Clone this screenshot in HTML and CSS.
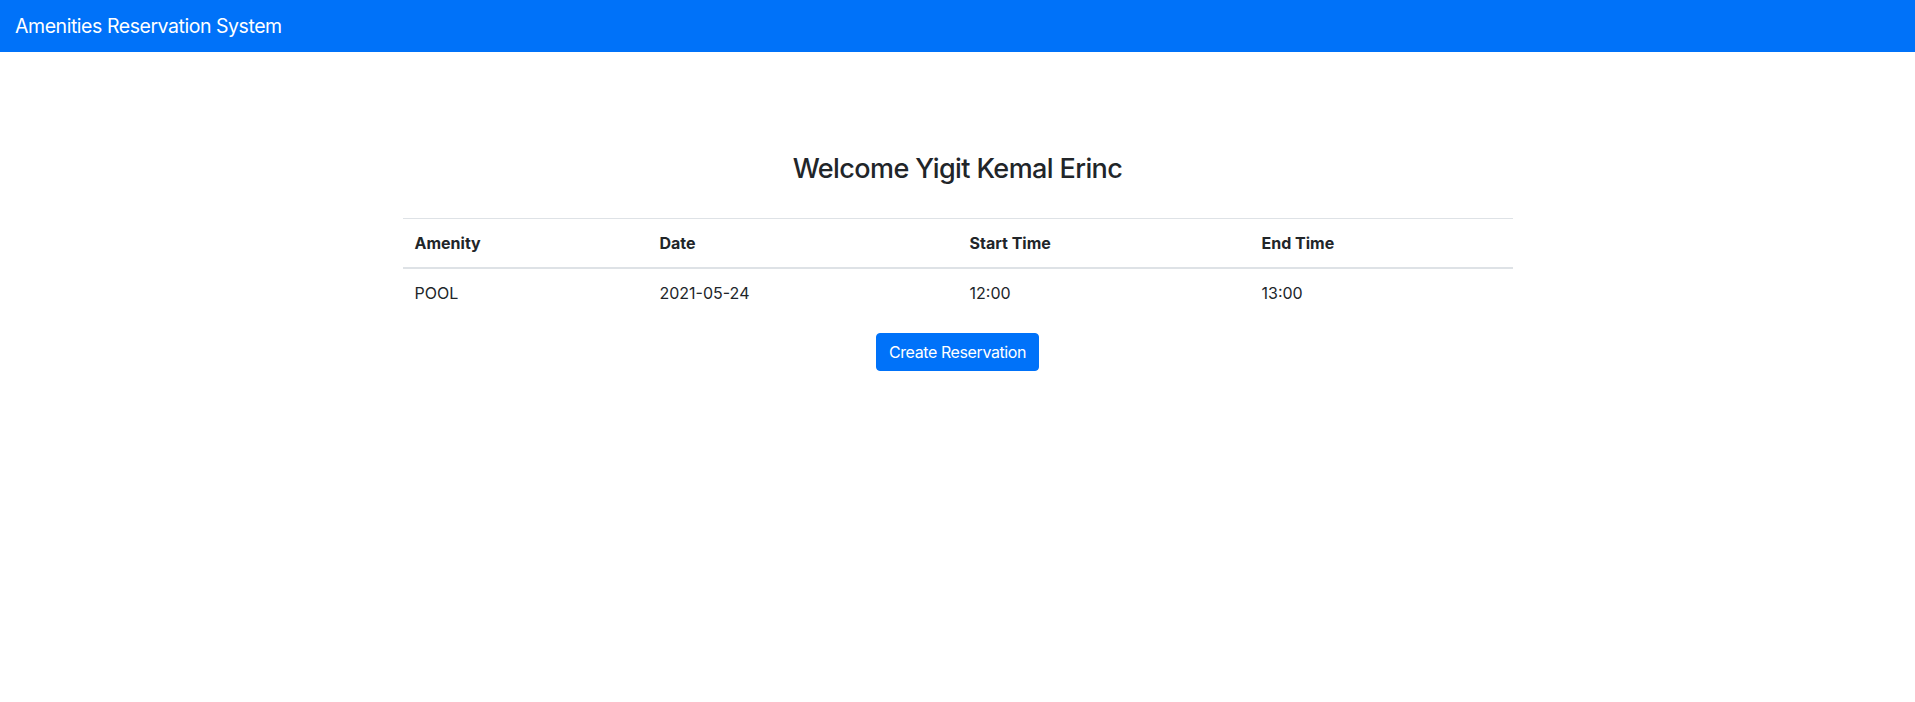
FILE: index.html
```html
<!DOCTYPE html>
<html lang="en">
<head>
<meta charset="utf-8">
<title>Amenities Reservation System</title>
<link rel="stylesheet" href="styles.css">
</head>
<body>
<nav class="navbar">
  <span class="brand">Amenities Reservation System</span>
</nav>
<main class="container">
  <h3 class="welcome">Welcome Yigit Kemal Erinc</h3>
  <table class="table">
    <colgroup>
      <col class="c-amenity">
      <col class="c-date">
      <col class="c-start">
      <col class="c-end">
    </colgroup>
    <thead>
      <tr>
        <th>Amenity</th>
        <th>Date</th>
        <th>Start Time</th>
        <th>End Time</th>
      </tr>
    </thead>
    <tbody>
      <tr>
        <td>POOL</td>
        <td>2021-05-24</td>
        <td>12:00</td>
        <td>13:00</td>
      </tr>
    </tbody>
  </table>
  <div class="actions">
    <button class="btn-primary" type="button">Create Reservation</button>
  </div>
</main>
</body>
</html>
```

FILE: styles.css
```css
* { box-sizing: border-box; }
html, body { margin: 0; padding: 0; }
body {
  font-family: Inter, "Noto Sans", "Liberation Sans", sans-serif;
  font-size: 16px;
  line-height: 1.5;
  color: #212529;
  background: #fff;
}
.navbar {
  height: 52px;
  background: #0072f9;
  display: flex;
  align-items: center;
  padding: 0 15px;
}
.brand {
  color: #fff;
  font-size: 19.5px;
  letter-spacing: -0.45px;
  line-height: 30px;
}
.container {
  width: 1110px;
  margin: 0 auto;
  padding-top: 101px;
}
.welcome {
  margin: 0 0 33px;
  text-align: center;
  font-size: 27px;
  letter-spacing: -0.6px;
  font-weight: 500;
  line-height: 1.2;
}
.table {
  width: 100%;
  border-collapse: collapse;
  margin-bottom: 16px;
  table-layout: fixed;
}
.c-amenity { width: 245px; }
.c-date { width: 310px; }
.c-start { width: 292px; }
.c-end { width: 263px; }
.table th, .table td {
  padding: 12px;
  text-align: left;
  vertical-align: top;
  border-top: 1px solid #dee2e6;
}
.table th { font-weight: 700; }
.table thead th {
  border-bottom: 2px solid #dee2e6;
}
.actions {
  display: flex;
  justify-content: center;
}
.btn-primary {
  font-family: inherit;
  font-size: 16px;
  letter-spacing: -0.4px;
  line-height: 24px;
  padding: 6px 12px;
  color: #fff;
  background: #0072f9;
  border: 1px solid #0072f9;
  border-radius: 4px;
  cursor: pointer;
}
```
